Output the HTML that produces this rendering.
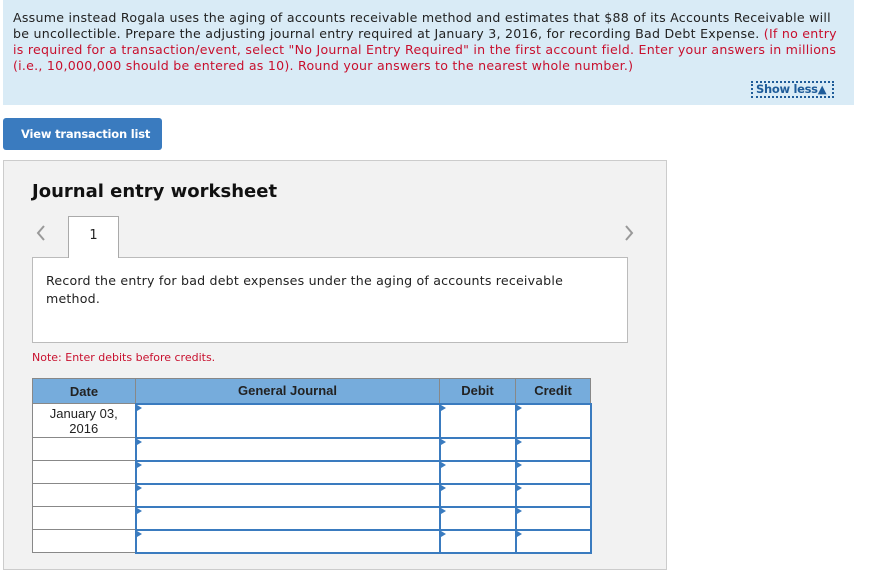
<!DOCTYPE html>
<html><head><meta charset="utf-8"><style>
*{margin:0;padding:0;box-sizing:border-box}
body{width:885px;height:563px;overflow:hidden;background:#fff;font-family:"DejaVu Sans","Liberation Sans",sans-serif;position:relative;color:#222}
.top{position:absolute;left:3px;top:0;width:851px;height:105px;background:#d9ebf6}
.q{position:absolute;left:10px;top:10px;font-size:12.6px;line-height:16px;white-space:nowrap;letter-spacing:0.25px}
.red{color:#c8102e}
.show{position:absolute;left:748px;top:81px;width:83px;height:17px;border:2px dotted #1f5c99;font-size:11.5px;font-weight:bold;color:#1f5c99;padding-left:3px;line-height:13px;white-space:nowrap;letter-spacing:-0.3px}
.btn{position:absolute;left:3px;top:118px;width:159px;height:32px;background:#3a7bbf;border-radius:3px;color:#fff;font-size:11.5px;font-weight:bold;line-height:33px;padding-left:18px;white-space:nowrap;letter-spacing:-0.2px}
.ws{position:absolute;left:3px;top:160px;width:664px;height:410px;background:#f2f2f2;border:1px solid #ccc}
.title{position:absolute;left:32px;top:181px;font-size:18px;font-weight:bold;color:#111}
.tab{position:absolute;left:68px;top:216px;width:51px;height:42px;background:#fff;border:1px solid #aaa;border-bottom:none;text-align:center;font-size:13px;line-height:38px;z-index:2}
.chev{position:absolute;top:224px}
.box{position:absolute;left:32px;top:257px;width:596px;height:86px;background:#fff;border:1px solid #bbb;font-size:12.6px;line-height:18px;padding:14px 0 0 13px;letter-spacing:0.2px;white-space:nowrap}
.note{position:absolute;left:32px;top:351px;font-size:11px;color:#c8102e}
table{position:absolute;left:32px;top:378px;border-collapse:collapse;font-family:"Liberation Sans",sans-serif;font-size:13px}
td,th{border:1px solid #888;padding:0}
th{background:#76acdc;height:25px;font-weight:bold;color:#222}
td{background:#fff;position:relative}
td.in{border:2px solid #3a7bbf}
td.in::before{content:"";position:absolute;left:0;top:0;border-left:5px solid #3a7bbf;border-top:3px solid transparent;border-bottom:3px solid transparent}
</style></head><body>
<div class="top">
<div class="q">Assume instead Rogala uses the aging of accounts receivable method and estimates that $88 of its Accounts Receivable will<br>be uncollectible. Prepare the adjusting journal entry required at January 3, 2016, for recording Bad Debt Expense. <span class="red">(If no entry</span><br><span class="red">is required for a transaction/event, select "No Journal Entry Required" in the first account field. Enter your answers in millions</span><br><span class="red">(i.e., 10,000,000 should be entered as 10). Round your answers to the nearest whole number.)</span></div>
<div class="show">Show less▲</div>
</div>
<div class="btn">View transaction list</div>
<div class="ws"></div>
<div class="title">Journal entry worksheet</div>
<svg class="chev" style="left:35px" width="12" height="18" viewBox="0 0 12 18"><path d="M9 2 L3 9 L9 16" fill="none" stroke="#999" stroke-width="2"/></svg>
<svg class="chev" style="left:623px" width="12" height="18" viewBox="0 0 12 18"><path d="M3 2 L9 9 L3 16" fill="none" stroke="#999" stroke-width="2"/></svg>
<div class="tab">1</div>
<div class="box">Record the entry for bad debt expenses under the aging of accounts receivable<br>method.</div>
<div class="note">Note: Enter debits before credits.</div>
<table>
<tr><th style="width:103px">Date</th><th style="width:304px">General Journal</th><th style="width:76px">Debit</th><th style="width:75px">Credit</th></tr>
<tr style="height:34px"><td style="text-align:center;vertical-align:top;line-height:15px;padding-top:2px">January 03,<br>2016</td><td class="in"></td><td class="in"></td><td class="in"></td></tr>
<tr style="height:23px"><td></td><td class="in"></td><td class="in"></td><td class="in"></td></tr>
<tr style="height:23px"><td></td><td class="in"></td><td class="in"></td><td class="in"></td></tr>
<tr style="height:23px"><td></td><td class="in"></td><td class="in"></td><td class="in"></td></tr>
<tr style="height:23px"><td></td><td class="in"></td><td class="in"></td><td class="in"></td></tr>
<tr style="height:23px"><td></td><td class="in"></td><td class="in"></td><td class="in"></td></tr>
</table>
</body></html>
